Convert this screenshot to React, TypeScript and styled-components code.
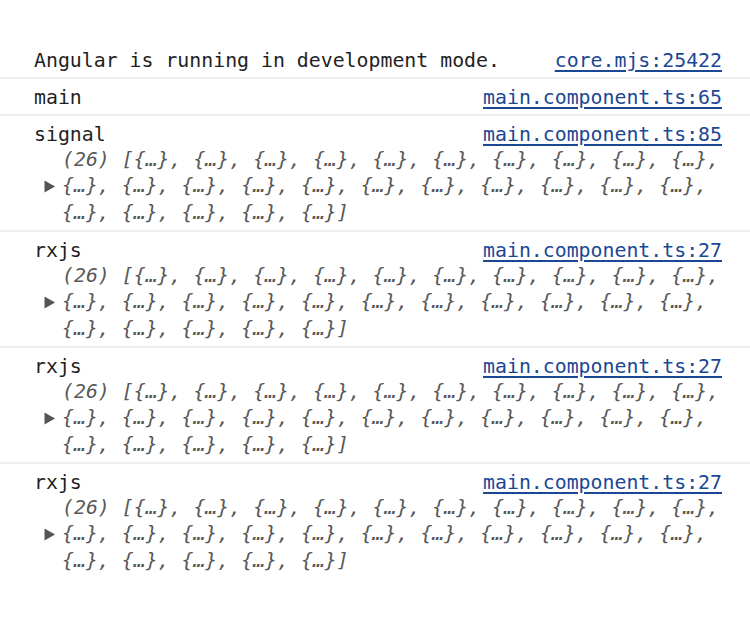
import React from "react";
import styled, { createGlobalStyle } from "styled-components";

const Global = createGlobalStyle`
  html, body { margin: 0; padding: 0; background: #ffffff; }
  body { font-family: "DejaVu Sans Mono", "Liberation Mono", monospace; }
`;

const Console = styled.div`
  width: 750px;
  padding-top: 42px;
  font-family: "DejaVu Sans Mono", "Liberation Mono", monospace;
  font-size: 19.85px;
  color: #1f1f1f;
`;

const Message = styled.div<{ $last?: boolean }>`
  padding: 7px 28px 4px 34px;
  border-bottom: ${(p) => (p.$last ? "none" : "2px solid #eeeeee")};
`;

const Head = styled.div`
  display: flex;
  justify-content: space-between;
  align-items: baseline;
  line-height: 24px;
  white-space: pre;
`;

const Label = styled.span`
  color: #1f1f1f;
`;

const SourceLink = styled.a`
  color: #1b4894;
  text-decoration: underline;
  text-underline-offset: 3px;
  text-decoration-thickness: 1.5px;
  cursor: pointer;
`;

const Preview = styled.div`
  position: relative;
  padding-left: 28px;
  font-style: italic;
  color: #585858;
  line-height: 26.33px;
`;

const PreviewLine = styled.div`
  white-space: pre;
`;

const Toggle = styled.span`
  position: absolute;
  left: 10px;
  top: 26.33px;
  height: 26.33px;
  display: flex;
  align-items: center;
`;

const TriangleIcon = () => (
  <svg width="12" height="13" viewBox="0 0 12 13">
    <path d="M0.5 0.5 L11 6.5 L0.5 12.5 Z" fill="#555555" />
  </svg>
);

const obj = "{…}";
const joinObjs = (n: number) => Array.from({ length: n }, () => obj).join(", ");

const lines = [
  `(26) [${joinObjs(10)},`,
  `${joinObjs(11)},`,
  `${joinObjs(5)}]`,
];

type Msg = { label: string; source: string; preview?: boolean };

const messages: Msg[] = [
  { label: "Angular is running in development mode.", source: "core.mjs:25422" },
  { label: "main", source: "main.component.ts:65" },
  { label: "signal", source: "main.component.ts:85", preview: true },
  { label: "rxjs", source: "main.component.ts:27", preview: true },
  { label: "rxjs", source: "main.component.ts:27", preview: true },
  { label: "rxjs", source: "main.component.ts:27", preview: true },
];

export default function App() {
  return (
    <>
      <Global />
      <Console>
        {messages.map((m, i) => (
          <Message key={i} $last={i === messages.length - 1}>
            <Head>
              <Label>{m.label}</Label>
              <SourceLink>{m.source}</SourceLink>
            </Head>
            {m.preview && (
              <Preview>
                <Toggle>
                  <TriangleIcon />
                </Toggle>
                {lines.map((l, j) => (
                  <PreviewLine key={j}>{l}</PreviewLine>
                ))}
              </Preview>
            )}
          </Message>
        ))}
      </Console>
    </>
  );
}
